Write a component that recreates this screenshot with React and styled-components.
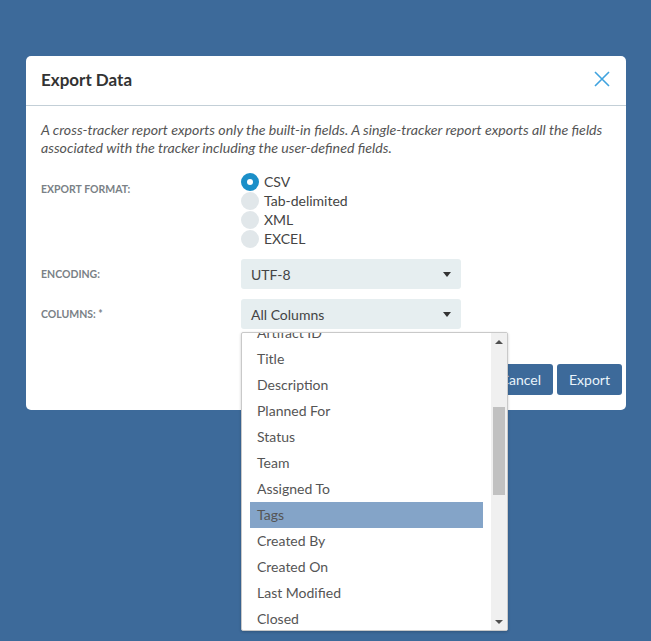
import React from "react";
import styled, { createGlobalStyle } from "styled-components";

const Global = createGlobalStyle`
  html, body { margin: 0; padding: 0; }
  body {
    background: #3d6a9a;
    font-family: Lato, "Open Sans", sans-serif;
    width: 651px;
    height: 641px;
    overflow: hidden;
  }
`;

const Page = styled.div`
  padding: 56px 25px 0 26px;
`;

const Modal = styled.div`
  width: 600px;
  background: #fff;
  border-radius: 5px;
`;

const Header = styled.div`
  height: 50px;
  box-sizing: border-box;
  display: flex;
  align-items: center;
  justify-content: space-between;
  padding: 0 15px 3px;
  border-bottom: 1px solid #c3cfd7;
`;

const Title = styled.h2`
  margin: 0;
  font-size: 17px;
  font-weight: 700;
  color: #333;
`;

const Close = styled.button`
  border: 0;
  background: none;
  padding: 0;
  width: 18px;
  height: 18px;
  display: flex;
  cursor: pointer;
`;

const Body = styled.div`
  padding: 15px 15px 0;
`;

const Description = styled.p`
  margin: 0 0 15px;
  font-size: 14.2px;
  line-height: 18px;
  font-style: italic;
  color: #555;
`;

const Row = styled.div`
  display: grid;
  grid-template-columns: 200px 220px;
  margin-bottom: ${(p) => p.$gap ?? 10}px;
`;

const Label = styled.div`
  font-size: 10.5px;
  font-weight: 700;
  text-transform: uppercase;
  color: #7a8186;
  padding-top: ${(p) => p.$top ?? 0}px;
  align-self: ${(p) => (p.$center ? "center" : "start")};
`;

const RadioGroup = styled.div`
  display: flex;
  flex-direction: column;
`;

const RadioRow = styled.label`
  display: flex;
  align-items: center;
  height: 19px;
  font-size: 14px;
  color: #444;
  gap: 5px;
`;

const RadioDot = styled.span`
  width: 18px;
  height: 18px;
  border-radius: 50%;
  background: ${(p) => (p.$on ? "#1b8fc8" : "#e1e7ea")};
  display: flex;
  align-items: center;
  justify-content: center;
  &::after {
    content: "";
    width: 6px;
    height: 6px;
    border-radius: 50%;
    background: #fff;
    display: ${(p) => (p.$on ? "block" : "none")};
  }
`;

const SelectWrap = styled.div`
  position: relative;
`;

const Select = styled.div`
  height: 30px;
  background: #e6eef0;
  border-radius: 3px;
  display: flex;
  align-items: center;
  justify-content: space-between;
  padding: 0 10px;
  font-size: 14px;
  color: #444;
`;

const Caret = styled.span`
  width: 0;
  height: 0;
  border-left: 4.5px solid transparent;
  border-right: 4.5px solid transparent;
  border-top: 5px solid #333;
`;

const Footer = styled.div`
  display: flex;
  justify-content: flex-end;
  gap: 4px;
  padding: 35px 4px 15px 0;
`;

const Button = styled.button`
  height: 31px;
  padding: 0 12px;
  border: 0;
  border-radius: 3px;
  background: #3d6a9a;
  color: #e9f4fb;
  font-family: inherit;
  font-size: 14px;
`;

const Dropdown = styled.div`
  position: absolute;
  top: calc(100% + 3px);
  left: 0;
  width: 265px;
  height: 297px;
  background: #fff;
  border: 1px solid #c9c9c9;
  border-radius: 2px;
  box-shadow: 0 1px 3px rgba(0, 0, 0, 0.2);
  display: flex;
  overflow: hidden;
  z-index: 5;
`;

const ListViewport = styled.div`
  flex: 1;
  overflow: hidden;
  padding: 0 8px;
`;

const List = styled.ul`
  list-style: none;
  margin: -13px 0 0;
  padding: 0;
`;

const Item = styled.li`
  height: 26px;
  line-height: 26px;
  padding-left: 7px;
  font-size: 14px;
  color: #555;
  background: ${(p) => (p.$active ? "#84a4c8" : "transparent")};
`;

const Scrollbar = styled.div`
  width: 16px;
  background: #f0f0f0;
  display: flex;
  flex-direction: column;
  align-items: center;
`;

const ArrowBox = styled.div`
  height: 17px;
  width: 16px;
  display: flex;
  align-items: center;
  justify-content: center;
  &::after {
    content: "";
    border-left: 4px solid transparent;
    border-right: 4px solid transparent;
    ${(p) =>
      p.$up
        ? "border-bottom: 4px solid #505050;"
        : "border-top: 4px solid #505050;"}
  }
`;

const Track = styled.div`
  flex: 1;
  width: 100%;
  padding: 57px 2px 0;
  box-sizing: border-box;
`;

const Thumb = styled.div`
  height: 88px;
  background: #c1c1c1;
`;

const columns = [
  "Artifact ID",
  "Title",
  "Description",
  "Planned For",
  "Status",
  "Team",
  "Assigned To",
  "Tags",
  "Created By",
  "Created On",
  "Last Modified",
  "Closed",
];

export default function App() {
  return (
    <>
      <Global />
      <Page>
        <Modal>
          <Header>
            <Title>Export Data</Title>
            <Close aria-label="Close">
              <svg width="18" height="18" viewBox="0 0 18 18">
                <path d="M2 2 L16 16 M16 2 L2 16" stroke="#3fa3df" strokeWidth="1.6" />
              </svg>
            </Close>
          </Header>
          <Body>
            <Description>
              A cross-tracker report exports only the built-in fields. A single-tracker report exports all the fields
              associated with the tracker including the user-defined fields.
            </Description>
            <Row $gap={11}>
              <Label $top={11}>Export format:</Label>
              <RadioGroup>
                {["CSV", "Tab-delimited", "XML", "EXCEL"].map((f, i) => (
                  <RadioRow key={f}>
                    <RadioDot $on={i === 0} />
                    {f}
                  </RadioRow>
                ))}
              </RadioGroup>
            </Row>
            <Row>
              <Label $center>Encoding:</Label>
              <Select>
                UTF-8
                <Caret />
              </Select>
            </Row>
            <Row $gap={0}>
              <Label $center>Columns: *</Label>
              <SelectWrap>
                <Select>
                  All Columns
                  <Caret />
                </Select>
                <Dropdown>
                  <ListViewport>
                    <List>
                      {columns.map((c) => (
                        <Item key={c} $active={c === "Tags"}>
                          {c}
                        </Item>
                      ))}
                    </List>
                  </ListViewport>
                  <Scrollbar>
                    <ArrowBox $up />
                    <Track>
                      <Thumb />
                    </Track>
                    <ArrowBox />
                  </Scrollbar>
                </Dropdown>
              </SelectWrap>
            </Row>
          </Body>
          <Footer>
            <Button>Cancel</Button>
            <Button>Export</Button>
          </Footer>
        </Modal>
      </Page>
    </>
  );
}
